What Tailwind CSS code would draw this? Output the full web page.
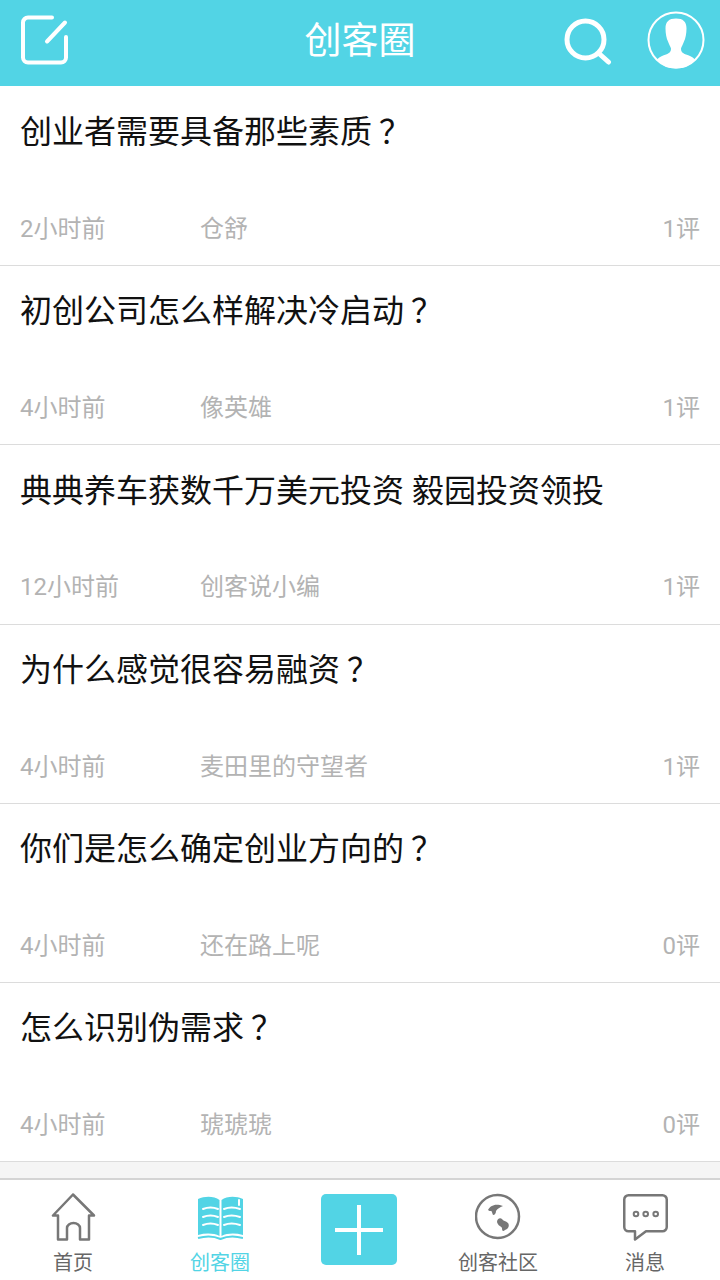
<!DOCTYPE html>
<html lang="zh">
<head>
<meta charset="utf-8">
<script src="https://cdn.jsdelivr.net/npm/@tailwindcss/browser@4"></script>
</head>
<body class="bg-white">
<div class="w-[720px] h-[1280px] flex flex-col overflow-hidden bg-white font-['Roboto','Noto_Sans_CJK_SC',sans-serif]">
  <header class="h-[86px] shrink-0 bg-[#52d4e5] flex items-center justify-between pl-5 pr-[14px] pb-[7px] relative">
    <svg class="w-[50px] h-[50px]" viewBox="0 0 50 50" fill="none" stroke="white" stroke-width="4" stroke-linecap="round" stroke-linejoin="round"><path d="M32 2.500H8a5 5 0 0 0-5 5V42.500a5 5 0 0 0 5 5H41a5 5 0 0 0 5-5V22"/><path d="M27 26.500L45 7.500"/></svg>
    <h1 class="absolute left-0 right-0 top-[23px] text-center text-[37px] leading-[37px] text-white">创客圈</h1>
    <div class="flex items-center gap-[33px]">
      <svg class="w-[50px] h-[50px]" viewBox="0 0 50 50" fill="none" stroke="white" stroke-linecap="round"><circle cx="22.500" cy="24.500" r="18.500" stroke-width="5"/><path d="M36 38.500L45.500 47" stroke-width="5"/></svg>
      <svg class="w-[60px] h-[60px]" viewBox="0 0 60 60"><circle cx="30" cy="30" r="27.500" fill="none" stroke="white" stroke-width="2"/><path fill="white" d="M30 8.500c-7 0-10.500 3-10.500 10 0 5 1 10 2.500 13 1 3 2.500 5 3 7 0 3-1 4.500-5 6-3 1-6 2-9 5 5 6 11 9 19 9s14-3 19-9c-3-3-6-4-9-5-4-1.500-5-3-5-6 .5-2 2-4 3-7 1.500-3 2.500-8 2.500-13 0-7-3.500-10-10.500-10z"/></svg>
    </div>
  </header>

  <main class="flex-1 flex flex-col">
    <article class="h-[180px] shrink-0 border-b border-[#dcdcdc] pt-[25px] px-5 flex flex-col">
      <h2 class="text-[32px] leading-[42px] text-[#111]">创业者需要具备那些素质<span class="ml-[7px]">？</span></h2>
      <div class="mt-auto mb-[18px] flex items-center text-[24px] leading-[36px] text-[#b3b3b3]"><span class="w-[180px]">2小时前</span><span class="flex-1">仓舒</span><span>1评</span></div>
    </article>
    <article class="h-[179px] shrink-0 border-b border-[#dcdcdc] pt-[24px] px-5 flex flex-col">
      <h2 class="text-[32px] leading-[42px] text-[#111]">初创公司怎么样解决冷启动<span class="ml-[7px]">？</span></h2>
      <div class="mt-auto mb-[18px] flex items-center text-[24px] leading-[36px] text-[#b3b3b3]"><span class="w-[180px]">4小时前</span><span class="flex-1">像英雄</span><span>1评</span></div>
    </article>
    <article class="h-[180px] shrink-0 border-b border-[#dcdcdc] pt-[25px] px-5 flex flex-col">
      <h2 class="text-[32px] leading-[42px] text-[#111]">典典养车获数千万美元投资 毅园投资领投</h2>
      <div class="mt-auto mb-[19px] flex items-center text-[24px] leading-[36px] text-[#b3b3b3]"><span class="w-[180px]">12小时前</span><span class="flex-1">创客说小编</span><span>1评</span></div>
    </article>
    <article class="h-[179px] shrink-0 border-b border-[#dcdcdc] pt-[24px] px-5 flex flex-col">
      <h2 class="text-[32px] leading-[42px] text-[#111]">为什么感觉很容易融资<span class="ml-[7px]">？</span></h2>
      <div class="mt-auto mb-[18px] flex items-center text-[24px] leading-[36px] text-[#b3b3b3]"><span class="w-[180px]">4小时前</span><span class="flex-1">麦田里的守望者</span><span>1评</span></div>
    </article>
    <article class="h-[179px] shrink-0 border-b border-[#dcdcdc] pt-[24px] px-5 flex flex-col">
      <h2 class="text-[32px] leading-[42px] text-[#111]">你们是怎么确定创业方向的<span class="ml-[7px]">？</span></h2>
      <div class="mt-auto mb-[18px] flex items-center text-[24px] leading-[36px] text-[#b3b3b3]"><span class="w-[180px]">4小时前</span><span class="flex-1">还在路上呢</span><span>0评</span></div>
    </article>
    <article class="h-[179px] shrink-0 border-b border-[#dcdcdc] pt-[24px] px-5 flex flex-col">
      <h2 class="text-[32px] leading-[42px] text-[#111]">怎么识别伪需求<span class="ml-[7px]">？</span></h2>
      <div class="mt-auto mb-[18px] flex items-center text-[24px] leading-[36px] text-[#b3b3b3]"><span class="w-[180px]">4小时前</span><span class="flex-1">琥琥琥</span><span>0评</span></div>
    </article>
    <div class="flex-1 bg-[#f5f5f5]"></div>
  </main>

  <nav class="h-[102px] shrink-0 bg-white border-t-2 border-[#d4d4d4] grid grid-cols-[146px_148px_130px_148px_146px] text-[20px] leading-[26px] text-[#666]">
    <a class="flex flex-col items-center pt-[13px]">
      <svg class="w-[46px] h-[48px]" viewBox="0 0 46 48" fill="none" stroke="#777" stroke-width="2.500" stroke-linejoin="round" stroke-linecap="round"><path d="M23 1.500L3 22.500H8V46.500H17V35a6.500 5 0 0 1 13 0V46.500H39V22.500H44z"/></svg>
      <span class="mt-[9px]">首页</span>
    </a>
    <a class="flex flex-col items-center pt-[13px] text-[#52d4e5]">
      <svg class="w-[46px] h-[48px]" viewBox="0 0 46 48"><path fill="#52d4e5" d="M1 6c7-3 16-3 21.500 1V43c-6-3-14-3-21.500-1z"/><path fill="#52d4e5" d="M46 6c-7-3-16-3-21.500 1V43c6-3 14-3 21.500-1z"/><g fill="none" stroke="white" stroke-width="2" stroke-linecap="round"><path d="M6 16c5-2 10-2 15 0M6 24c5-2 10-2 15 0M6 32c5-2 10-2 15 0M27 16c5-2 10-2 16 0M27 24c5-2 10-2 16 0M27 32c5-2 10-2 16 0M42 7v5"/></g><path fill="none" stroke="#52d4e5" stroke-width="2" d="M1 45c7-2 16-2 22.500 1 6.500-3 15.500-3 22.500-1"/></svg>
      <span class="mt-[9px]">创客圈</span>
    </a>
    <a class="flex justify-center pt-[14px]">
      <div class="w-[76px] h-[71px] rounded-[5px] bg-[#52d4e5] flex items-center justify-center">
        <svg class="w-[48px] h-[50px]" viewBox="0 0 48 50" stroke="white" stroke-width="4"><path d="M24 0V50M0 25H48"/></svg>
      </div>
    </a>
    <a class="flex flex-col items-center pt-[13px]">
      <svg class="w-[46px] h-[48px]" viewBox="0 0 46 48"><circle cx="22.500" cy="23.500" r="21.500" fill="none" stroke="#777" stroke-width="2.500"/><path fill="#777" d="M13 17C15 13 20 10 28 13C25 14 22 16 21 18C21 20 20 22 18 22C17 20 17 18 16 18C15 18 14 18 13 17z"/><path fill="#777" d="M22 29C22 26 25 24 27 26C28 28 31 28 33 30C35 33 33 36 30 37C28 39 27 38 27 35C26 33 23 33 22 29z"/></svg>
      <span class="mt-[9px] whitespace-nowrap">创客社区</span>
    </a>
    <a class="flex flex-col items-center pt-[13px]">
      <svg class="w-[46px] h-[48px]" viewBox="0 0 46 48"><path fill="none" stroke="#777" stroke-width="2.500" stroke-linejoin="round" d="M6.500 2.250H40.500a4.250 4.250 0 0 1 4.250 4.250V34a4.250 4.250 0 0 1-4.250 4.250H24L13 46.500V38.250H6.500A4.250 4.250 0 0 1 2.250 34V6.500A4.250 4.250 0 0 1 6.500 2.250z"/><g fill="none" stroke="#777" stroke-width="2"><circle cx="14" cy="21" r="2.300"/><circle cx="23.700" cy="21" r="2.300"/><circle cx="33.700" cy="21" r="2.300"/></g></svg>
      <span class="mt-[9px]">消息</span>
    </a>
  </nav>
</div>
</body>
</html>
